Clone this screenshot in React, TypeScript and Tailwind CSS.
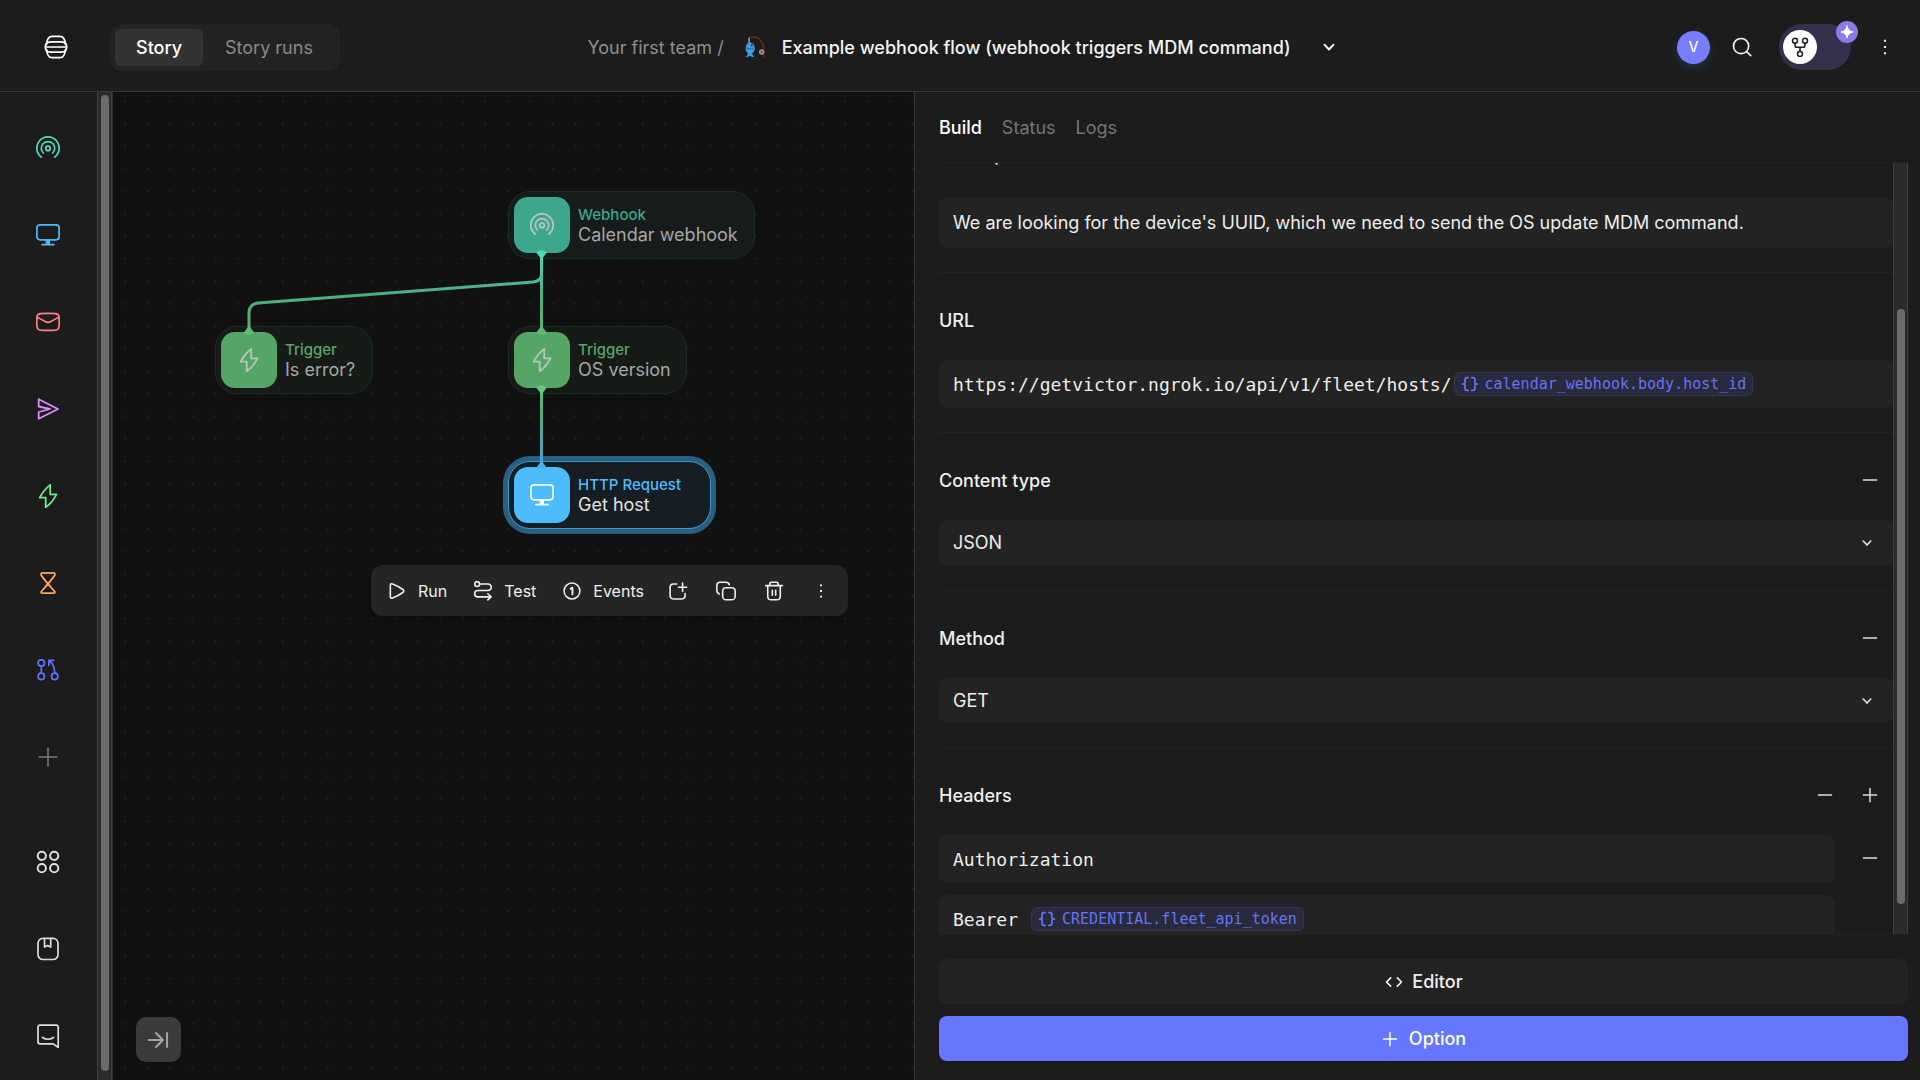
import type { ReactNode } from "react";

type IconProps = { className?: string };

function Svg({ size = 24, sw = 1.5, className = "", children }: { size?: number; sw?: number; className?: string; children: ReactNode }) {
  return (
    <svg
      width={size}
      height={size}
      viewBox="0 0 24 24"
      fill="none"
      stroke="currentColor"
      strokeWidth={sw}
      strokeLinecap="round"
      strokeLinejoin="round"
      className={`shrink-0 ${className}`}
      aria-hidden="true"
    >
      {children}
    </svg>
  );
}

const WebhookIcon = ({ className }: IconProps) => (
  <Svg className={className} sw={1.7}>
    <path d="M5.2 21A11.2 11.2 0 1 1 18.8 21" />
    <path d="M7.3 17A6.7 6.7 0 1 1 16.7 17" />
    <circle cx="12" cy="12.4" r="2.3" />
  </Svg>
);
const MonitorIcon = ({ className }: IconProps) => (
  <Svg className={className} sw={1.7}>
    <rect x="0.9" y="1.8" width="22.2" height="15" rx="3" />
    <path d="M10.5 17h3v4h-3z" fill="currentColor" strokeWidth="1" />
    <path d="M6 21.6h12" />
  </Svg>
);
const MailIcon = () => (
  <Svg sw={1.7}>
    <path d="M4.5 3.6Q12 3 19.5 3.6Q22.9 3.8 23 7Q23.4 12 23 16.5Q22.6 19.9 19.5 20.2Q12 20.7 4.5 20.2Q1.4 19.9 1 16.5Q.6 12 1 7Q1.1 3.8 4.5 3.6z" />
    <path d="M1.3 7.5Q5.5 9.2 9 11.5Q12 13.3 15 11.5Q18.5 9.2 22.7 7.5" />
  </Svg>
);
const SendIcon = () => (
  <Svg sw={1.8}>
    <path d="M2.7 2.2L22 12L2.7 21.8V15L14 12L2.7 9.5z" />
  </Svg>
);
const BoltIcon = ({ className }: IconProps) => (
  <Svg className={className} sw={1.8}>
    <path d="M14.2 0.9V10.3H20.5Q16 19 9.7 23.2V13.7H3.7Q7.5 6.2 14.2 0.9z" />
  </Svg>
);
const HourglassIcon = () => (
  <Svg sw={1.8}>
    <path d="M5.3 2.2Q12 1.6 18.7 2.2Q19.3 3 18.7 4.2Q16.5 8 5.3 20.5Q4.8 21.6 5.5 21.9Q12 22.4 18.5 21.9Q19.2 21.6 18.7 20.5Q7.5 8 5.3 4.2Q4.7 3 5.3 2.2z" />
  </Svg>
);
const BranchIcon = () => (
  <Svg sw={1.7}>
    <circle cx="5.3" cy="5" r="3.2" />
    <circle cx="5.3" cy="18.4" r="3.2" />
    <circle cx="18.7" cy="18.4" r="3.2" />
    <path d="M5.3 8.2v7" />
    <path d="M18.7 15.2C18.7 9.5 17.5 6 13.3 2.6M12.9 7.3V2.3H17.8" />
  </Svg>
);
const PlusIcon = ({ size = 24, sw = 1.5 }: { size?: number; sw?: number }) => (
  <Svg size={size} sw={sw}>
    <path d="M12 2.5v19M2.5 12h19" strokeLinecap="butt" />
  </Svg>
);
const MinusIcon = ({ size = 24, sw = 1.5 }: { size?: number; sw?: number }) => (
  <Svg size={size} sw={sw}>
    <path d="M2.5 12h19" strokeLinecap="butt" />
  </Svg>
);
const AppsIcon = () => (
  <Svg sw={2}>
    <circle cx="5.8" cy="5.8" r="4.1" />
    <circle cx="18.2" cy="5.8" r="4.1" />
    <circle cx="5.8" cy="18.2" r="4.1" />
    <circle cx="18.2" cy="18.2" r="4.1" />
  </Svg>
);
const NotebookIcon = () => (
  <Svg sw={1.7}>
    <rect x="2" y="1.3" width="20" height="21.2" rx="5" />
    <path d="M8.500 1.5V10L11.5 8.6L14.7 10V1.5" />
  </Svg>
);
const ChatIcon = () => (
  <Svg sw={1.7}>
    <path d="M4 1.1H20Q22.200 1.100 22.2 3.2V23.3L17 19.9H4Q2 19.9 2 17.7V3.2Q2 1.1 4 1.1z" />
    <path d="M6.5 13.5Q12 17 17.5 13.5" />
  </Svg>
);
const DotsIcon = ({ size = 20 }: { size?: number }) => (
  <Svg size={size}>
    <path d="M12 4.5h.01M12 12h.01M12 19.5h.01" strokeWidth="2.6" strokeLinecap="square" />
  </Svg>
);
const ChevronIcon = ({ size = 24, className }: { size?: number; className?: string }) => (
  <Svg size={size} sw={1.9} className={className}>
    <path d="M7.5 9.7l4.5 4.800l4.500-4.800" />
  </Svg>
);
const LogoIcon = () => (
  <Svg sw={1.7}>
    <path d="M2.5 9.5Q3.3 1.3 8 1.3H16Q20.7 1.3 21.5 9.5" />
    <path d="M2.5 14.5Q3.3 22.7 8 22.7H16Q20.7 22.7 21.5 14.5" />
    <path d="M2 9Q3 6.9 7 6.9H17Q21 6.9 22 9" />
    <path d="M2 15Q3 17.1 7 17.1H17Q21 17.1 22 15" />
    <path d="M2.3 9Q.2 12 2.3 15M21.7 9Q23.8 12 21.7 15M1.5 12H22.5" />
  </Svg>
);
const FishingIcon = () => (
  <svg width="22" height="24" viewBox="0 0 24 24" fill="none" aria-hidden="true" className="shrink-0">
    <path d="M6 1.500C17 -.5 23 6 21.2 22.5" stroke="#6b251d" strokeWidth="1.8" strokeLinecap="round" />
    <path d="M5.500 2V8" stroke="#c9d4da" strokeWidth="1.2" />
    <path d="M6.5 7C10.5 7.5 12.3 11 11.7 14.5C11.3 17 9.3 18.5 8.6 19.5Q10.5 21 11 23.3Q8 22.6 6.5 21.5Q4.5 23.2 1.8 23Q3.500 21 4.600 19.3C2.3 17.5 1.2 14.5 2 11.5C2.6 9 4.2 7 6.5 7z" fill="#3f9fe8" />
    <path d="M2.7 12.5Q6 16 10.8 12.8" stroke="#1f6fb5" strokeWidth="1.4" />
    <circle cx="8.5" cy="10.3" r="1.2" fill="#173a5c" />
    <circle cx="19.3" cy="17.5" r="3" fill="#8d979d" />
    <circle cx="19.3" cy="17.5" r="1.2" fill="#4a5257" />
  </svg>
);

const railTop: { label: string; color: string; icon: ReactNode }[] = [
  { label: "Webhook", color: "text-[#4ddbb8]", icon: <WebhookIcon /> },
  { label: "HTTP Request", color: "text-[#4dbcff]", icon: <MonitorIcon /> },
  { label: "Receive Email", color: "text-[#ff8080]", icon: <MailIcon /> },
  { label: "Send Email", color: "text-[#e08cff]", icon: <SendIcon /> },
  { label: "Trigger", color: "text-[#6ee787]", icon: <BoltIcon /> },
  { label: "Event Transform", color: "text-[#ffa75a]", icon: <HourglassIcon /> },
  { label: "Send to Story", color: "text-[#6074ff]", icon: <BranchIcon /> },
  { label: "More actions", color: "text-[#7c7c7c]", icon: <PlusIcon /> },
];
const railBottom: { label: string; icon: ReactNode }[] = [
  { label: "Templates", icon: <AppsIcon /> },
  { label: "Notes", icon: <NotebookIcon /> },
  { label: "Help", icon: <ChatIcon /> },
];

function Header() {
  return (
    <header className="grid h-[92px] shrink-0 grid-cols-[1fr_auto_1fr] items-center border-b border-[#383838] pt-[3px]">
      <div className="flex items-center gap-[42px] pl-11">
        <a href="#home" aria-label="Home" className="text-white">
          <LogoIcon />
        </a>
        <nav className="flex rounded-xl bg-[#232323] p-[5px]">
          <button className="h-[37px] rounded-md bg-[#333333] px-[21px] font-medium text-white">Story</button>
          <button className="h-[37px] px-[22px] text-[#8a8a8a]">Story runs</button>
        </nav>
      </div>
      <div className="flex items-center pl-2">
        <a href="#team" className="text-[#8f8f8f]">Your first team /</a>
        <span className="ml-5 flex"><FishingIcon /></span>
        <h1 className="ml-4 font-medium text-[#f2f2f2]">Example webhook flow (webhook triggers MDM command)</h1>
        <button aria-label="Story menu" className="ml-[26px] text-white">
          <ChevronIcon />
        </button>
      </div>
      <div className="flex items-center justify-end pr-[25px]">
        <button className="flex size-[33px] items-center justify-center rounded-full bg-[#767dff] text-sm font-medium text-white shadow-[0_3px_8px_#203845]">V</button>
        <button aria-label="Search" className="ml-[21px] text-[#f2f2f2]">
          <Svg size={22} sw={1.8}>
            <circle cx="11" cy="11" r="8.3" />
            <path d="M17 17l4.500 4.500" />
          </Svg>
        </button>
        <button aria-label="Build mode" className="relative ml-[26px] flex h-[46px] w-[72px] items-center rounded-full bg-[#352f4c] pl-1">
          <span className="flex size-[34px] items-center justify-center rounded-full bg-white text-[#1c1c1c]">
            <Svg size={20} sw={1.8}>
              <circle cx="6" cy="4.500" r="3" />
              <circle cx="18" cy="4.5" r="3" />
              <circle cx="12" cy="20.500" r="3" />
              <path d="M6 7.500v2.300q0 2.500 2.500 2.500h7q2.500 0 2.500-2.500v-2.300M12 12.300v5.200" />
            </Svg>
          </span>
          <span className="absolute -top-[3px] -right-[7px] flex size-[22px] items-center justify-center rounded-full bg-[#8b7be8] text-white">
            <Svg size={14} sw={0}>
              <path d="M12 1.5Q13.5 10.5 22.5 12Q13.5 13.5 12 22.5Q10.5 13.5 1.5 12Q10.5 10.5 12 1.5z" fill="currentColor" stroke="currentColor" strokeWidth="1.5" />
            </Svg>
          </span>
        </button>
        <button aria-label="More" className="ml-6 text-[#e8e8e8]">
          <DotsIcon />
        </button>
      </div>
    </header>
  );
}

function Rail() {
  return (
    <aside className="flex shrink-0">
      <div className="flex w-[97px] flex-col justify-between pt-3 pr-0.5 pb-px">
        <div className="flex flex-col">
          {railTop.map((i) => (
            <button key={i.label} aria-label={i.label} className={`flex h-[87px] items-center justify-center ${i.color}`}>
              {i.icon}
            </button>
          ))}
        </div>
        <div className="flex flex-col">
          {railBottom.map((i) => (
            <button key={i.label} aria-label={i.label} className="flex h-[87px] items-center justify-center text-[#dedede]">
              {i.icon}
            </button>
          ))}
        </div>
      </div>
      <div className="flex w-[15px] justify-center border-x border-[#404040] bg-[#2b2b2b] pt-[3px] pb-[9px]">
        <div className="w-2 rounded-full bg-[#6b6b6b]" />
      </div>
      <div className="w-px bg-[#2e2e2e]" />
    </aside>
  );
}

function Node({ kind, name, frame, tile, kindColor, nameColor, icon }: {
  kind: string; name: string; frame: string; tile: string; kindColor: string; nameColor: string; icon: ReactNode;
}) {
  return (
    <article className={`absolute flex items-center gap-2 rounded-[22px] border p-[5px] ${frame}`}>
      <div className={`flex size-14 items-center justify-center rounded-[14px] ${tile}`}>{icon}</div>
      <div className="flex flex-col whitespace-nowrap">
        <span className={`text-[15px] leading-5 font-medium ${kindColor}`}>{kind}</span>
        <span className={`leading-5 ${nameColor}`}>{name}</span>
      </div>
    </article>
  );
}

function Toolbar() {
  return (
    <div role="toolbar" className="absolute top-[473px] left-[258px] flex h-[51px] w-[477px] items-center rounded-xl bg-[#252525] pr-[18px] pl-4 text-base text-[#efefef] shadow-lg">
      <button className="flex items-center gap-[11px]">
        <Svg size={20} sw={1.9}>
          <path d="M4 5.5Q4 2.6 6.7 3.7Q14 6.5 19.5 10.5Q21 12 19.5 13.5Q14 17.5 6.7 20.3Q4 21.4 4 18.5z" />
        </Svg>
        Run
      </button>
      <button className="ml-[26px] flex items-center gap-[11px]">
        <Svg size={20} sw={1.9}>
          <circle cx="5" cy="3.6" r="2.9" />
          <path d="M8 3.6h9.5q4.3 0 4.3 3.9t-4.3 3.9H6q-4 0-4 3.8t4 3.8H21.5M17.8 15.3L21.8 19l-4 3.7" />
        </Svg>
        Test
      </button>
      <button className="ml-[26px] flex items-center gap-[11px]">
        <Svg size={20} sw={1.8}>
          <circle cx="12" cy="12" r="9.5" />
          <path d="M10.5 9.2L12.5 8V16" strokeWidth="2.3" />
        </Svg>
        Events
      </button>
      <div className="ml-auto flex items-center gap-7">
        <button aria-label="Add note">
          <Svg size={20} sw={1.9}>
            <path d="M10.5 3.500H6.500Q2.5 3.5 2.5 7.5V17.5Q2.500 21.500 6.5 21.5H16.500Q20.500 21.5 20.5 17.5V15" />
            <path d="M17.5 2.5v10M12.500 7.500h10" />
          </Svg>
        </button>
        <button aria-label="Duplicate">
          <Svg size={20} sw={1.9}>
            <rect x="8" y="8" width="15" height="14.500" rx="4" />
            <path d="M4 15.500Q1 14.500 1 11.5V5.5Q1 1.5 5 1.5H11.500Q15.500 1.500 16 4.500" />
          </Svg>
        </button>
        <button aria-label="Delete">
          <Svg size={20} sw={1.9}>
            <path d="M2 5.5H22M7 5V3.5Q7 1.5 9 1.5H15Q17 1.5 17 3.5V5M4.500 5.500V18.5Q4.5 22.5 8.5 22.5H15.5Q19.5 22.5 19.5 18.5V5.5M10 11v6M14 11v6" />
          </Svg>
        </button>
        <button aria-label="More actions">
          <DotsIcon size={18} />
        </button>
      </div>
    </div>
  );
}

function Canvas() {
  return (
    <main className="relative min-w-0 flex-1 overflow-hidden bg-[#111111]">
      <svg className="absolute inset-0 size-full" aria-hidden="true">
        <defs>
          <pattern id="dots" x="1" y="-2" width="22.5" height="22.5" patternUnits="userSpaceOnUse">
            <rect x="10.5" y="10.5" width="1.5" height="1.5" fill="#2b2b2b" />
          </pattern>
        </defs>
        <rect width="100%" height="100%" fill="url(#dots)" />
      </svg>

      <Node kind="Webhook" name="Calendar webhook" icon={<WebhookIcon />}
        frame="left-[395px] top-[99px] w-[247px] border-[#1a2d29] bg-[#151c1b]"
        tile="bg-[#3da68e] text-[#bdc4c1]" kindColor="text-[#3da68e]" nameColor="text-[#a6a6a6]" />
      <Node kind="Trigger" name="Is error?" icon={<BoltIcon />}
        frame="left-[102px] top-[234px] w-[158px] border-[#1c2b1f] bg-[#171b17]"
        tile="bg-[#55a567] text-[#bcc4bd]" kindColor="text-[#55a567]" nameColor="text-[#a6a6a6]" />
      <Node kind="Trigger" name="OS version" icon={<BoltIcon />}
        frame="left-[395px] top-[234px] w-[179px] border-[#1c2b1f] bg-[#171b17]"
        tile="bg-[#55a567] text-[#bcc4bd]" kindColor="text-[#55a567]" nameColor="text-[#a6a6a6]" />
      <Node kind="HTTP Request" name="Get host" icon={<MonitorIcon />}
        frame="left-[395px] top-[369px] w-[203px] border-[#4297cb] bg-[#161e24] ring-5 ring-[#296080]"
        tile="bg-[#4dbcff] text-white" kindColor="text-[#4dbcff]" nameColor="text-[#e2e2e2]" />

      <svg className="pointer-events-none absolute inset-0 size-full" fill="none" strokeWidth="3" aria-hidden="true">
        <defs>
          <linearGradient id="toTrigger" gradientUnits="userSpaceOnUse" x1="0" y1="161" x2="0" y2="240">
            <stop offset="0" stopColor="#4ddbb8" />
            <stop offset="0.5" stopColor="#4aae83" />
            <stop offset="1" stopColor="#58b56c" />
          </linearGradient>
          <linearGradient id="toHttp" gradientUnits="userSpaceOnUse" x1="0" y1="296" x2="0" y2="375">
            <stop offset="0" stopColor="#5fc277" />
            <stop offset="0.35" stopColor="#56a878" />
            <stop offset="1" stopColor="#489fda" />
          </linearGradient>
        </defs>
        <path d="M428.5 161V240" stroke="url(#toTrigger)" />
        <path d="M428.5 161V182Q428.5 189 420 190L145 211Q136 212 136 221V240" stroke="url(#toTrigger)" />
        <path d="M428.5 296V375" stroke="url(#toHttp)" />
        <g strokeWidth="0">
          <path d="M423 160.5Q428.5 156 434 160.5L429.5 166H427.5z" fill="#4ddbb8" />
          <path d="M423 295.5Q428.5 291 434 295.5L429.5 301H427.5z" fill="#62c97a" />
          <path d="M423 241L427.5 235H429.5L434 241Q428.5 245 423 241z" fill="#5fba72" />
          <path d="M130.5 241L135 235H137L141.5 241Q136 245 130.5 241z" fill="#5fba72" />
          <path d="M423 376L427.5 370H429.5L434 376z" fill="#48aeee" />
        </g>
      </svg>

      <Toolbar />

      <button aria-label="Collapse panel" className="absolute bottom-[18px] left-[23px] flex size-[45px] items-center justify-center rounded-[10px] bg-[#3b3b3b] text-[#a3a3a3]">
        <Svg size={24} sw={2.1}>
          <path d="M2 12H15.500M9 5L16 12L9 19M20 5V19" />
        </Svg>
      </button>
    </main>
  );
}

const divider = "border-b border-[#232323]";

function SectionHead({ id, title, children }: { id: string; title: string; children?: ReactNode }) {
  return (
    <div className="mb-[17px] flex h-[46px] items-center justify-between">
      <label htmlFor={id} className="font-medium text-[#efefef]">{title}</label>
      <div className="flex gap-[21px] pr-[11px] text-[#dcdcdc]">{children}</div>
    </div>
  );
}

function IconButton({ label, children }: { label: string; children: ReactNode }) {
  return (
    <button aria-label={label} className="flex size-6 items-center justify-center">
      {children}
    </button>
  );
}

function Chip({ children }: { children: ReactNode }) {
  return (
    <button className="flex h-6 items-center gap-1.5 rounded-md border border-[#33345a] bg-[#292a3b] px-1.5 text-[15px] text-[#6374f5]">
      <Svg size={18} sw={2.3}>
        <path d="M9.5 3.5H8Q5.5 3.5 5.5 6V9.5Q5.5 12 2 12Q5.5 12 5.5 14.5V18Q5.5 20.5 8 20.5H9.5M14.5 3.5H16Q18.5 3.5 18.5 6V9.5Q18.5 12 22 12Q18.500 12 18.500 14.5V18Q18.5 20.5 16 20.5H14.5" />
      </Svg>
      {children}
    </button>
  );
}

function Select({ id, value, options }: { id: string; value: string; options: string[] }) {
  return (
    <div className="relative flex items-center">
      <select id={id} defaultValue={value} className="h-[45px] w-full appearance-none rounded-lg bg-[#232323] px-[14px] text-[#ededed]">
        {options.map((o) => (
          <option key={o}>{o}</option>
        ))}
      </select>
      <ChevronIcon size={20} className="pointer-events-none absolute right-4 text-[#e8e8e8]" />
    </div>
  );
}

const mono = "font-['DejaVu_Sans_Mono',monospace]";
const field = "flex h-12 items-center rounded-lg bg-[#232323] px-[14px] text-[#ededed]";

function Panel() {
  return (
    <section className="flex w-[1006px] max-w-[60%] shrink-0 flex-col border-l border-[#383838] pr-3 pl-6">
      <nav className={`flex h-[71px] shrink-0 items-center gap-5 ${divider}`}>
        <button className="font-medium text-white">Build</button>
        <button className="text-[#757575]">Status</button>
        <button className="text-[#757575]">Logs</button>
      </nav>

      <div className={`flex min-h-0 flex-1 overflow-hidden ${divider}`}>
        <div className="-mt-8 min-w-0 flex-1">
          <div className={`pb-6 ${divider}`}>
            <div className="pb-[3px]">
              <SectionHead id="description" title="Description" />
            </div>
            <input id="description" defaultValue="We are looking for the device's UUID, which we need to send the OS update MDM command." className="block h-[51px] w-full rounded-lg bg-[#232323] px-[14px] text-[#ededed]" />
          </div>
          <div className={`py-6 ${divider}`}>
            <SectionHead id="url" title="URL" />
            <div className={`${field} ${mono}`}>
              <input id="url" defaultValue="https://getvictor.ngrok.io/api/v1/fleet/hosts/" className="mr-0.5 field-sizing-content bg-transparent" />
              <Chip>calendar_webhook.body.host_id</Chip>
            </div>
          </div>
          <div className={`pt-6 pb-[25px] ${divider}`}>
            <SectionHead id="content-type" title="Content type">
              <IconButton label="Remove content type"><MinusIcon size={18} sw={2} /></IconButton>
            </SectionHead>
            <Select id="content-type" value="JSON" options={["JSON", "Form", "Data"]} />
          </div>
          <div className={`py-6 ${divider}`}>
            <SectionHead id="method" title="Method">
              <IconButton label="Remove method"><MinusIcon size={18} sw={2} /></IconButton>
            </SectionHead>
            <Select id="method" value="GET" options={["GET", "POST", "PUT", "PATCH", "DELETE"]} />
          </div>
          <div className="py-6">
            <SectionHead id="header-name" title="Headers">
              <IconButton label="Remove headers"><MinusIcon size={18} sw={2} /></IconButton>
              <IconButton label="Add header"><PlusIcon size={18} sw={2} /></IconButton>
            </SectionHead>
            <div className="flex">
              <div className="flex min-w-0 flex-1 flex-col gap-3">
                <input id="header-name" defaultValue="Authorization" className={`${field} ${mono}`} />
                <div className={`${field} ${mono}`}>
                  <input aria-label="Header value" defaultValue="Bearer" className="mr-[13px] field-sizing-content bg-transparent" />
                  <Chip>CREDENTIAL.fleet_api_token</Chip>
                </div>
              </div>
              <div className="flex w-[58px] justify-end pt-[11px] pr-[11px] text-[#dcdcdc]">
                <IconButton label="Remove Authorization header"><MinusIcon size={18} sw={2} /></IconButton>
              </div>
            </div>
          </div>
        </div>
        <div className="flex w-[15px] shrink-0 justify-center border-x border-[#404040] bg-[#2b2b2b] pt-[146px] pb-[30px]">
          <div className="w-2 rounded-full bg-[#6b6b6b]" />
        </div>
      </div>

      <div className="flex shrink-0 flex-col gap-3 pt-6 pb-[19px]">
        <button className="flex h-[45px] items-center justify-center gap-2 rounded-lg bg-[#232323] font-medium text-[#f0f0f0]">
          <Svg size={20} sw={2}>
            <path d="M8 7L3 12L8 17M16 7L21 12L16 17" />
          </Svg>
          Editor
        </button>
        <button className="flex h-[45px] items-center justify-center gap-2.5 rounded-lg bg-[#6577ff] font-medium text-white">
          <PlusIcon size={18} sw={1.9} />
          Option
        </button>
      </div>
    </section>
  );
}

export default function App() {
  return (
    <div className="flex h-screen flex-col overflow-hidden bg-[#1c1c1c] font-[Inter,sans-serif] text-[18px]">
      <Header />
      <div className="flex min-h-0 flex-1">
        <Rail />
        <Canvas />
        <Panel />
      </div>
    </div>
  );
}
